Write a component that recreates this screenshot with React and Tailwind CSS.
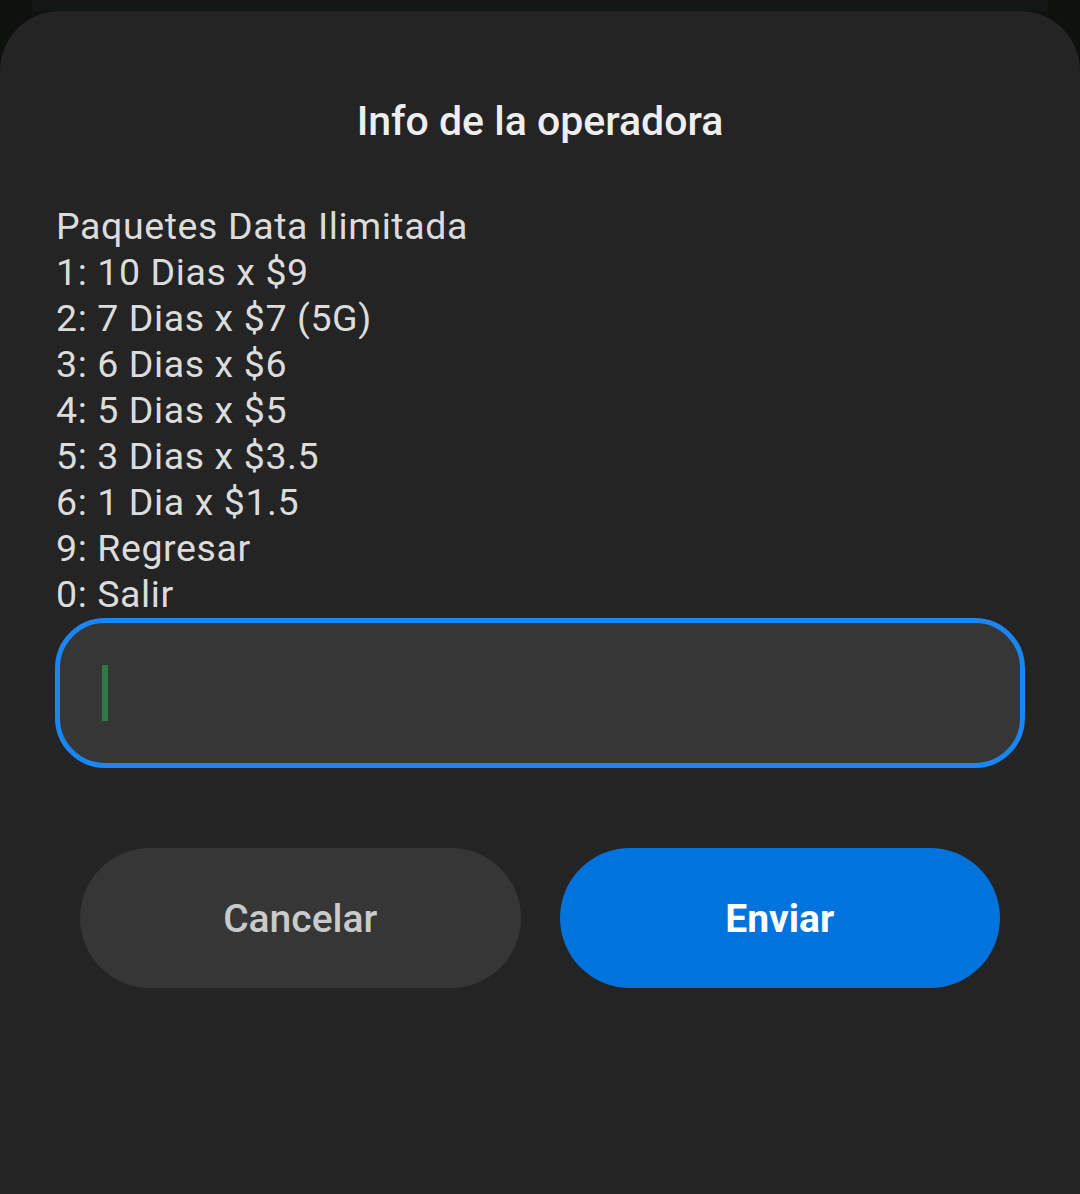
import React from "react";

const lines = [
  "Paquetes Data Ilimitada",
  "1: 10 Dias x $9",
  "2: 7 Dias x $7 (5G)",
  "3: 6 Dias x $6",
  "4: 5 Dias x $5",
  "5: 3 Dias x $3.5",
  "6: 1 Dia x $1.5",
  "9: Regresar",
  "0: Salir",
];

export default function App() {
  return (
    <div className="min-h-[1194px] w-full bg-[#0f110f] flex flex-col font-['Roboto',sans-serif] overflow-hidden">
      <div className="h-[11px] mx-[32px] bg-[#131715]" />
      <div className="flex-1 bg-[#242424] rounded-t-[60px] flex flex-col">
        <h1 className="pt-[86px] text-center text-[41px] leading-[48px] font-medium text-[#eeeeee]">
          Info de la operadora
        </h1>
        <div className="mt-[58px] px-[56px] text-[37.5px] leading-[46px] tracking-[0.6px] text-[#dcdcdc]">
          {lines.map((line) => (
            <div key={line}>{line}</div>
          ))}
        </div>
        <div className="mt-px mx-[55px] h-[150px] rounded-[50px] border-[5px] border-[#1a86f3] bg-[#363636] flex items-center px-[42px]">
          <div className="w-[6px] h-[56px] bg-[#2d7a45]" />
        </div>
        <div className="mt-[80px] mx-[80px] flex gap-[39px]">
          <button className="flex-1 h-[140px] pt-[3px] rounded-full bg-[#363636] text-[39px] font-medium text-[#cacaca]">
            Cancelar
          </button>
          <button className="flex-1 h-[140px] pt-[3px] rounded-full bg-[#0073dd] text-[39px] font-bold text-white">
            Enviar
          </button>
        </div>
      </div>
    </div>
  );
}
